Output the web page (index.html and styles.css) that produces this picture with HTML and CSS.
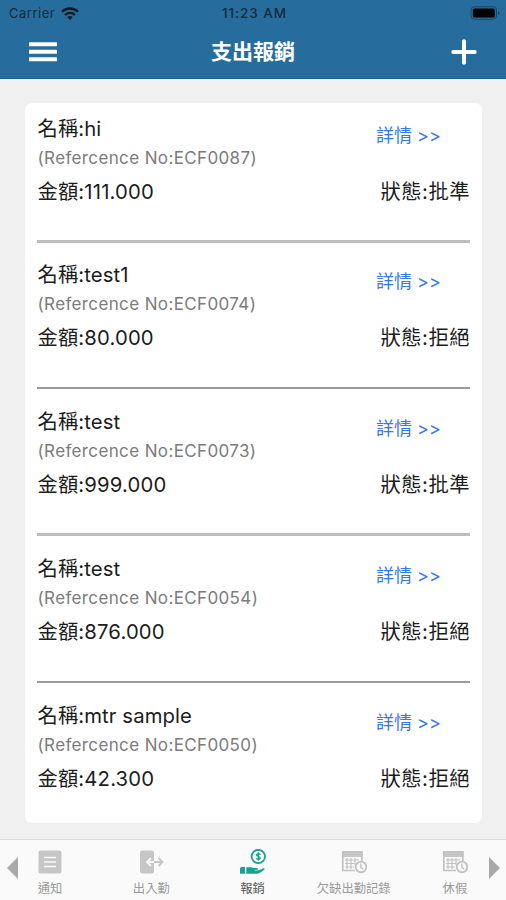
FILE: index.html
```html
<!DOCTYPE html>
<html lang="zh-Hant">
<head>
  <meta charset="UTF-8">
  <meta name="viewport" content="width=device-width, initial-scale=1.0">
  <title>支出報銷</title>
  <link rel="stylesheet" href="styles.css">
</head>
<body>
  <header class="header">
    <div class="status-bar">
      <div class="carrier">
        <span>Carrier</span>
        <svg width="18" height="13" viewBox="0 0 18 13" fill="none" stroke="#0b1a25" stroke-width="2.3">
          <path d="M1 4.8a11.3 11.3 0 0 1 16 0"/>
          <path d="M4 8a7 7 0 0 1 10 0"/>
          <path d="M9 13l-2.7-2.8a3.9 3.9 0 0 1 5.4 0z" fill="#0b1a25" stroke="none"/>
        </svg>
      </div>
      <span class="time">11:23 AM</span>
      <svg class="battery" width="30" height="14" viewBox="0 0 30 14">
        <rect x="1" y="0.8" width="25.5" height="12.4" rx="3.2" fill="none" stroke="#184763"/>
        <rect x="2.8" y="2.6" width="22" height="8.8" rx="1.5" fill="#000"/>
        <path d="M28 5v4q1.5-.6 1.5-2T28 5z" fill="#184763"/>
      </svg>
    </div>
    <div class="nav-bar">
      <svg width="28" height="20" viewBox="0 0 28 20" fill="#fff">
        <rect y="0.3" width="28" height="4" rx="0.6"/>
        <rect y="7.8" width="28" height="4" rx="0.6"/>
        <rect y="15.3" width="28" height="4" rx="0.6"/>
      </svg>
      <h1 class="title">支出報銷</h1>
      <svg class="add" width="26" height="26" viewBox="0 0 26 26" stroke="#fff" stroke-width="4" stroke-linecap="round">
        <path d="M13 2.3v21.4M2.3 13h21.4"/>
      </svg>
    </div>
  </header>

  <main class="content">
    <div class="card">
      <div class="claim">
        <div class="info">
          <div class="name">名稱:hi</div>
          <div class="ref">(Refercence No:ECF0087)</div>
          <div class="amount">金額:111.000</div>
        </div>
        <div class="side">
          <a class="detail">詳情 &gt;&gt;</a>
          <div class="status">狀態:批準</div>
        </div>
      </div>
      <div class="claim">
        <div class="info">
          <div class="name">名稱:test1</div>
          <div class="ref">(Refercence No:ECF0074)</div>
          <div class="amount">金額:80.000</div>
        </div>
        <div class="side">
          <a class="detail">詳情 &gt;&gt;</a>
          <div class="status">狀態:拒絕</div>
        </div>
      </div>
      <div class="claim">
        <div class="info">
          <div class="name">名稱:test</div>
          <div class="ref">(Refercence No:ECF0073)</div>
          <div class="amount">金額:999.000</div>
        </div>
        <div class="side">
          <a class="detail">詳情 &gt;&gt;</a>
          <div class="status">狀態:批準</div>
        </div>
      </div>
      <div class="claim">
        <div class="info">
          <div class="name">名稱:test</div>
          <div class="ref">(Refercence No:ECF0054)</div>
          <div class="amount">金額:876.000</div>
        </div>
        <div class="side">
          <a class="detail">詳情 &gt;&gt;</a>
          <div class="status">狀態:拒絕</div>
        </div>
      </div>
      <div class="claim">
        <div class="info">
          <div class="name">名稱:mtr sample</div>
          <div class="ref">(Refercence No:ECF0050)</div>
          <div class="amount">金額:42.300</div>
        </div>
        <div class="side">
          <a class="detail">詳情 &gt;&gt;</a>
          <div class="status">狀態:拒絕</div>
        </div>
      </div>
    </div>
  </main>

  <nav class="tab-bar">
    <svg class="arrow" width="11" height="22" viewBox="0 0 11 22"><path d="M11 0v22L0 11z" fill="#a9a9a9"/></svg>
    <div class="tabs">
      <div class="tab">
        <svg width="26" height="26" viewBox="0 0 26 26">
          <rect x="1.5" y="1.5" width="23" height="23" rx="2.5" fill="#c6c6c6"/>
          <path d="M7 8.5h12M7 13h12M7 17.5h12" stroke="#fafafa" stroke-width="1.7"/>
        </svg>
        <span>通知</span>
      </div>
      <div class="tab">
        <svg width="26" height="26" viewBox="0 0 26 26">
          <path d="M4 1.5h10q2 0 2 2v19q0 2-2 2H4q-2 0-2-2v-19q0-2 2-2z" fill="#c6c6c6"/>
          <path d="M9.5 13H16M13 9l-4 4 4 4" fill="none" stroke="#fafafa" stroke-width="1.8"/>
          <path d="M16 13h7.5M20.5 9l4 4-4 4" fill="none" stroke="#c6c6c6" stroke-width="1.8"/>
        </svg>
        <span>出入勤</span>
      </div>
      <div class="tab active">
        <svg width="26" height="26" viewBox="0 0 26 26" fill="#16a394">
          <circle cx="18.3" cy="7.5" r="6.7" fill="none" stroke="#16a394" stroke-width="1.8"/>
          <path d="M20.5 5.6q-2-1.5-3.6-.4-1.3 1.5 1.4 2.3 2.8.9 1.5 2.4-1.7 1-3.7-.5M18.3 3.4v8.2" fill="none" stroke="#16a394" stroke-width="1.3"/>
          <path d="M0 19.5q0-1.5 1.5-1.5H5v6.8H0z"/>
          <path d="M6.3 18.3h5q1.4.7 2.5.8h3q1.5.3 1 1.6l-4 .4q3.5.8 6.2-.4l3.5-1.5q1.7 0 1 1.4-3.5 3.4-6.8 4.2H6.3z"/>
        </svg>
        <span>報銷</span>
      </div>
      <div class="tab">
        <svg width="26" height="26" viewBox="0 0 26 26">
          <use href="#calendar"/>
        </svg>
        <span>欠缺出勤記錄</span>
      </div>
      <div class="tab">
        <svg width="26" height="26" viewBox="0 0 26 26">
          <g id="calendar" fill="none" stroke="#c2c2c2">
            <path d="M1 2h20.5v6H1z" fill="#c6c6c6" stroke="none"/>
            <path d="M14 21.5H1.800V3h19v9" stroke-width="1.7"/>
            <path d="M4 11h14M4 14.5h10.5M4 18h9M6 9v11M10 9v11M14 9v7" stroke-width="1.2"/>
            <circle cx="20" cy="18" r="5.3" fill="#fafafa" stroke-width="1.8"/>
            <path d="M19.8 14.5v4l2.5 1.5" stroke-width="1.4"/>
          </g>
        </svg>
        <span>休假</span>
      </div>
    </div>
    <svg class="arrow" width="11" height="22" viewBox="0 0 11 22"><path d="M0 0v22l11-11z" fill="#a9a9a9"/></svg>
  </nav>
</body>
</html>
```

FILE: styles.css
```css
* {
  box-sizing: border-box;
}
body {
  margin: 0;
  height: 900px;
  display: flex;
  flex-direction: column;
  overflow: hidden;
  background: #f0f0f0;
  font-family: Inter, "Noto Sans CJK TC", sans-serif;
  color: #1c1c1c;
}
svg {
  display: block;
  flex: none;
}

/* Header */
.header {
  height: 79px;
  background: #266d9d;
  border-bottom: 1px solid #1d6290;
}
.status-bar {
  height: 26px;
  padding: 0 6px 0 9px;
  display: grid;
  grid-template-columns: 1fr auto 1fr;
  align-items: center;
  font-size: 13px;
  line-height: 26px;
  color: #142c3d;
}
.carrier {
  display: flex;
  align-items: center;
  gap: 6px;
  letter-spacing: 0.5px;
}
.time {
  font-weight: 500;
  font-size: 13.5px;
  letter-spacing: 0.9px;
}
.battery {
  justify-self: end;
}
.nav-bar {
  height: 52px;
  padding: 0 29px;
  display: grid;
  grid-template-columns: 1fr auto 1fr;
  align-items: center;
}
.title {
  margin: 0;
  font-size: 21px;
  line-height: 30px;
  font-weight: 700;
  color: #fff;
}
.add {
  justify-self: end;
}

/* Claim list */
.content {
  flex: 1;
  padding: 24px 24px 0 25px;
}
.card {
  height: 720px;
  padding: 10.5px 12px 0;
  background: #fff;
  border-radius: 7px;
}
.claim {
  height: 129.25px;
  margin-bottom: 17.5px;
  display: flex;
  justify-content: space-between;
  border-bottom: 3px solid #bdbdbd;
}
.claim:nth-child(even) {
  height: 128.75px;
  margin-bottom: 18px;
  border-bottom: 2px solid #9c9c9c;
}
.claim:last-child {
  margin-bottom: 0;
  border-bottom: none;
}
.info,
.side {
  white-space: nowrap;
}
.info {
  padding-left: 0.5px;
}
.name,
.amount,
.status {
  font-size: 20.3px;
}
.name {
  line-height: 30px;
  letter-spacing: 0.1px;
}
.ref {
  font-size: 17px;
  line-height: 28px;
  letter-spacing: 0.37px;
  color: #7c7c7c;
}
.amount {
  letter-spacing: 0.15px;
}
.amount,
.status {
  line-height: 40px;
}
.side {
  width: 94px;
}
.detail {
  display: block;
  font-size: 18px;
  line-height: 43px;
  color: #3579e8;
}
.status {
  padding-top: 15px;
  letter-spacing: 0.5px;
  text-align: right;
}

/* Bottom tabs */
.tab-bar {
  height: 61px;
  padding: 0 6px 0 7px;
  display: flex;
  justify-content: space-between;
  background: #fafafa;
  border-top: 1px solid #dcdcdc;
}
.arrow {
  margin-top: 17px;
}
.tabs {
  width: 506px;
  margin: 0 -19px 0 -21px;
  display: flex;
}
.tab {
  flex: 1;
  padding-top: 9px;
  display: flex;
  flex-direction: column;
  align-items: center;
  font-size: 12.3px;
  line-height: 27px;
  white-space: nowrap;
  color: #999;
}
.active {
  color: #555;
}
```
